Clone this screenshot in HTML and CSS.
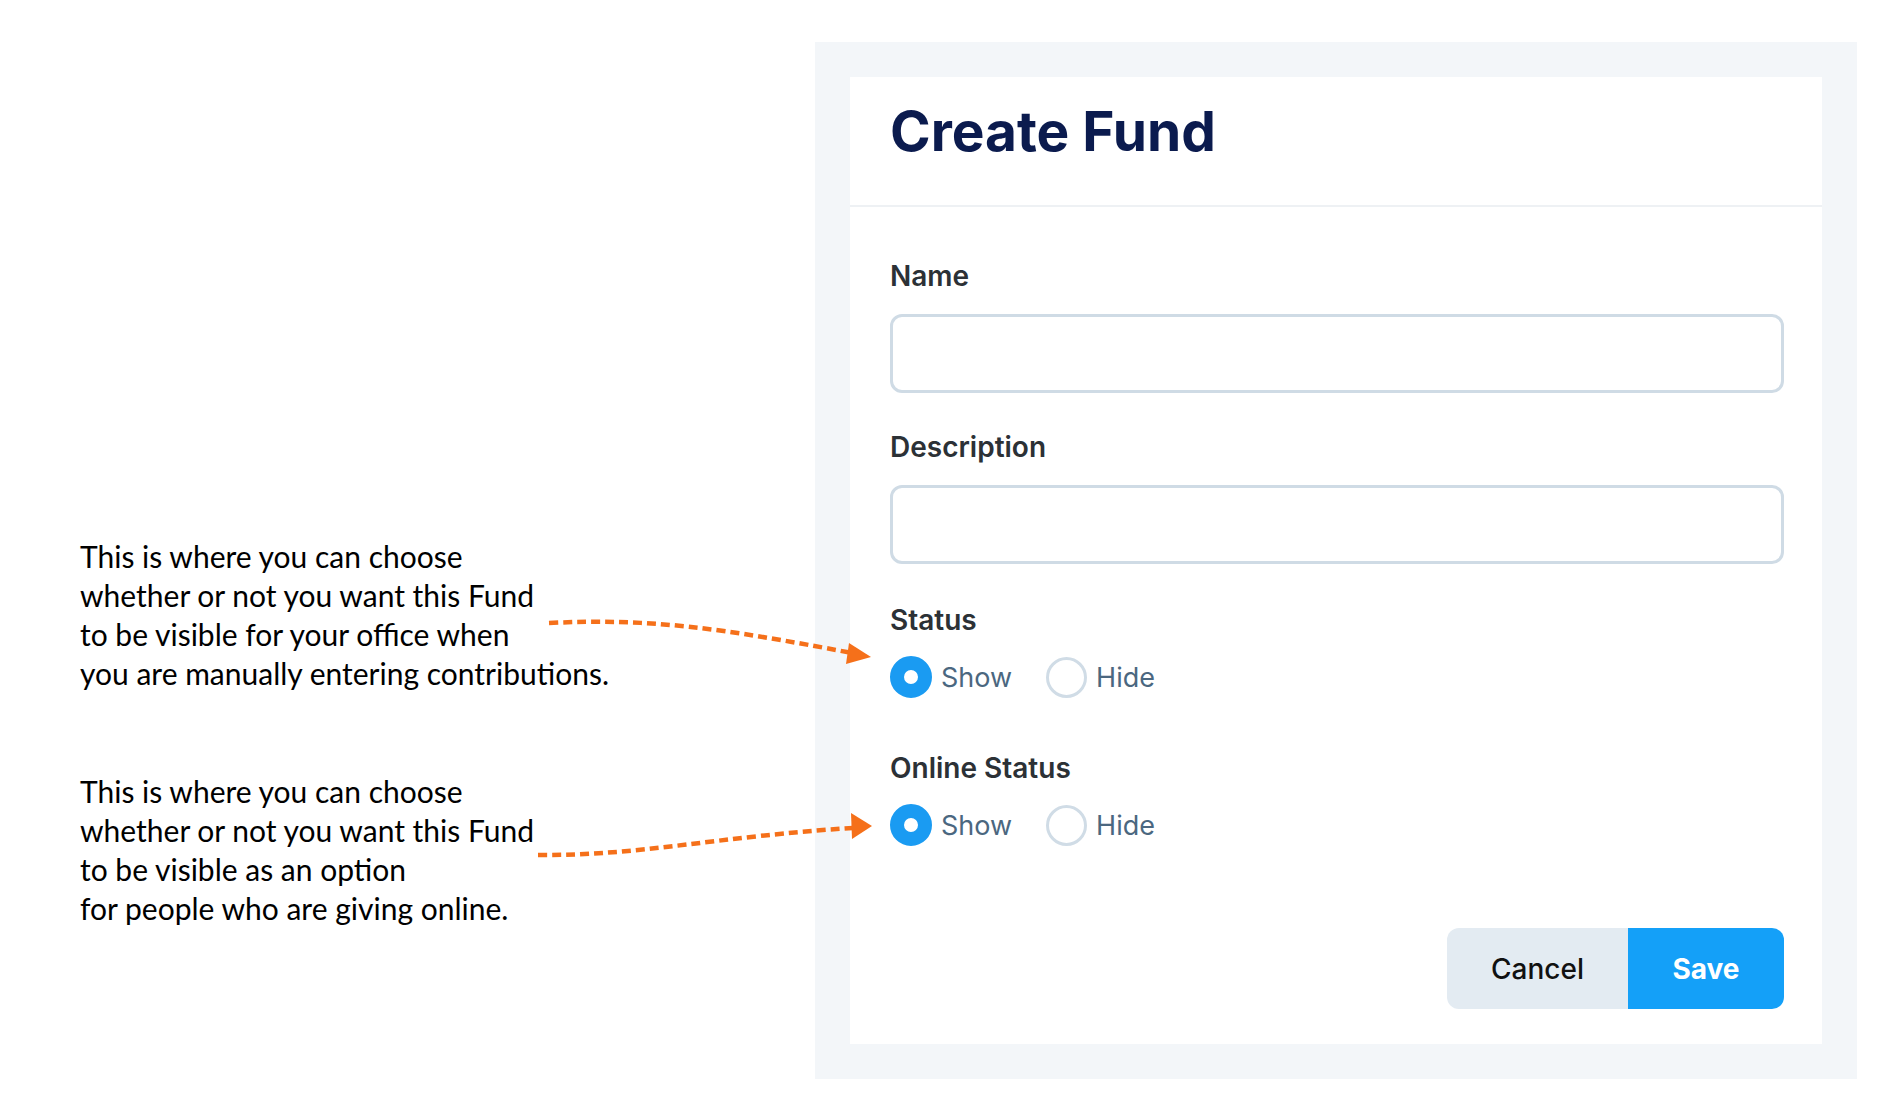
FILE: index.html
```html
<!DOCTYPE html>
<html lang="en">
<head>
    <meta charset="UTF-8">
    <meta name="viewport" content="width=device-width, initial-scale=1.0">
    <title>Create Fund</title>
    <link rel="stylesheet" href="styles.css">
</head>
<body>
    <div class="page">
        <div class="notes">
            <p class="note">This is where you can choose<br>whether or not you want this Fund<br>to be visible for your office when<br>you are manually entering contributions.</p>
            <p class="note">This is where you can choose<br>whether or not you want this Fund<br>to be visible as an option<br>for people who are giving online.</p>
        </div>

        <div class="panel">
            <div class="card">
                <div class="card-header">
                    <h1>Create Fund</h1>
                </div>
                <form class="card-body">
                    <div class="field">
                        <label for="name">Name</label>
                        <input type="text" id="name">
                    </div>
                    <div class="field">
                        <label for="description">Description</label>
                        <input type="text" id="description">
                    </div>
                    <div class="field field-radio">
                        <label>Status</label>
                        <div class="radios">
                            <span class="radio checked"></span><span class="radio-text">Show</span>
                            <span class="radio"></span><span class="radio-text">Hide</span>
                        </div>
                    </div>
                    <div class="field field-radio">
                        <label>Online Status</label>
                        <div class="radios">
                            <span class="radio checked"></span><span class="radio-text">Show</span>
                            <span class="radio"></span><span class="radio-text">Hide</span>
                        </div>
                    </div>
                    <div class="actions">
                        <button type="button" class="btn btn-cancel">Cancel</button>
                        <button type="button" class="btn btn-save">Save</button>
                    </div>
                </form>
            </div>
        </div>

        <!-- annotation arrows -->
        <svg class="arrows" width="1891" height="1114" viewBox="0 0 1891 1114">
            <path d="M549 623 C 650 618, 720 628, 852 653" />
            <polygon points="871,657 849,643 846,664" />
            <path d="M538 855 C 640 856, 720 836, 853 828" />
            <polygon points="872,826 851,813 852,839" />
        </svg>
    </div>
</body>
</html>
```
FILE: styles.css
```css
body {
    margin: 0;
    padding: 0;
    background-color: #fff;
    font-family: Inter, "Noto Sans", sans-serif;
}
.page {
    position: relative;
    display: flex;
    width: 1891px;
    height: 1114px;
    padding-top: 42px;
    box-sizing: border-box;
}
.notes {
    width: 815px;
    padding-left: 80px;
    padding-top: 495px;
    box-sizing: border-box;
}
.note {
    margin: 0 0 79px 0;
    font-family: Lato, "Open Sans", sans-serif;
    font-size: 30px;
    line-height: 39px;
    color: #000;
    white-space: nowrap;
}
.panel {
    width: 1042px;
    height: 1037px;
    padding: 35px;
    box-sizing: border-box;
    background: #f3f6f9;
}
.card {
    background: #fff;
    height: 100%;
}
.card-header {
    padding: 21px 40px 41px;
    border-bottom: 2px solid #eef1f4;
}
h1 {
    margin: 0;
    font-size: 55px;
    line-height: 66px;
    font-weight: 700;
    color: #0b1b4e;
}
.card-body {
    padding: 53px 38px 35px 40px;
}
.field {
    margin-bottom: 38px;
}
.field label {
    display: block;
    font-size: 28px;
    line-height: 32px;
    font-weight: 600;
    color: #2c3136;
    margin-bottom: 22px;
}
.field input[type="text"] {
    display: block;
    width: 100%;
    height: 79px;
    box-sizing: border-box;
    border: 3px solid #cfdbe5;
    border-radius: 12px;
    background: #fff;
    font-size: 26px;
    padding: 0 20px;
    outline: none;
}
.field-radio {
    margin-top: 40px;
    margin-bottom: 54px;
}
.field-radio label {
    margin-bottom: 20px;
}
.radios {
    display: flex;
    align-items: center;
    height: 42px;
}
.radio {
    width: 41px;
    height: 41px;
    box-sizing: border-box;
    border-radius: 50%;
    border: 3px solid #d0dce6;
    background: #fff;
}
.radio.checked {
    width: 42px;
    height: 42px;
    border: 14px solid #1a9bf2;
}
.radio-text {
    font-size: 27px;
    color: #4b6780;
    margin-left: 9px;
    margin-right: 34px;
}
.actions {
    display: flex;
    justify-content: flex-end;
    margin-top: 82px;
}
.btn {
    height: 81px;
    border: none;
    font-family: Inter, "Noto Sans", sans-serif;
    font-size: 28px;
    cursor: pointer;
}
.btn-cancel {
    width: 181px;
    background: #e3ebf2;
    color: #111;
    font-weight: 500;
    border-radius: 12px 0 0 12px;
}
.btn-save {
    width: 156px;
    background: #14a0f8;
    color: #fff;
    font-weight: 700;
    border-radius: 0 12px 12px 0;
}
.arrows {
    position: absolute;
    left: 0;
    top: 0;
    pointer-events: none;
}
.arrows path {
    fill: none;
    stroke: #f5701a;
    stroke-width: 4.5;
    stroke-dasharray: 9 5;
}
.arrows polygon {
    fill: #f5701a;
}
```
